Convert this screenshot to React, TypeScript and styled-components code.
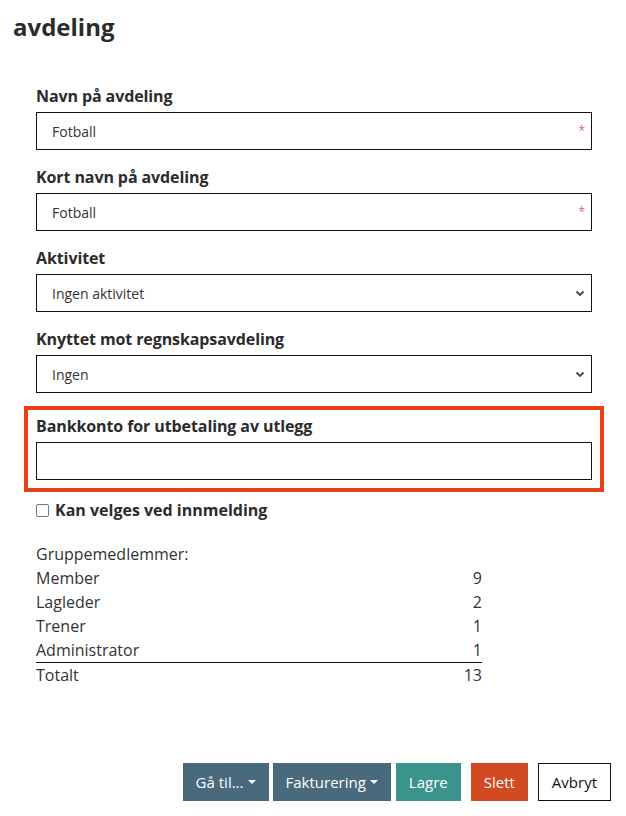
import * as React from 'react'
import styled, { createGlobalStyle } from 'styled-components'

const GlobalStyle = createGlobalStyle`
  body {
    margin: 0;
    background: #fff;
    font-family: "Open Sans", Lato, Arial, sans-serif;
    color: #333;
  }
`

const Page = styled.div`
  width: 626px;
  min-height: 816px;
  box-sizing: border-box;
  padding: 12px 15px 0 13px;
  display: flex;
  flex-direction: column;
`

const Heading = styled.h1`
  margin: 0;
  font-size: 24px;
  font-weight: 700;
  color: #2b2b2b;
  line-height: 30px;
`

const Form = styled.div`
  margin-top: 44px;
  padding: 0 19px 0 23px;
  display: flex;
  flex-direction: column;
`

const Field = styled.div`
  display: flex;
  flex-direction: column;
  margin-bottom: 17px;
`

const Label = styled.label`
  font-size: 16px;
  font-weight: 700;
  color: #2b2b2b;
  line-height: 20px;
  margin-bottom: 6px;
  letter-spacing: -0.1px;
`

const InputWrap = styled.div`
  position: relative;
  height: 38px;
  border: 1px solid #111;
  box-sizing: border-box;
  background: #fff;
  display: flex;
  align-items: center;
  padding: 0 6px 0 15px;
  font-size: 14px;
  color: #333;
`

const Required = styled.span`
  position: absolute;
  right: 6px;
  top: 12px;
  color: #f06060;
  font-size: 12px;
  line-height: 12px;
`

const Chevron = styled.svg`
  margin-left: auto;
  width: 10px;
  height: 10px;
`

const Highlight = styled.div`
  margin: -4px -12px 7px -12px;
  border: 4px solid #e8401c;
  padding: 6px 8px 8px 8px;
  display: flex;
  flex-direction: column;
`

const CheckRow = styled.label`
  display: flex;
  align-items: center;
  gap: 6px;
  font-size: 16px;
  font-weight: 700;
  color: #2b2b2b;
`

const Box = styled.span`
  width: 11px;
  height: 11px;
  border: 1px solid #777;
  border-radius: 2px;
  background: #fff;
`

const Members = styled.div`
  margin-top: 21px;
  width: 446px;
  font-size: 16px;
  color: #333;
`

const MemberRow = styled.div<{ $total?: boolean }>`
  display: flex;
  justify-content: space-between;
  height: 24px;
  line-height: 24px;
  border-top: ${p => (p.$total ? '1px solid #111' : 'none')};
  box-sizing: border-box;
`

const Actions = styled.div`
  margin-top: auto;
  margin-bottom: 15px;
  display: flex;
  justify-content: flex-end;
  gap: 4px;
`

const Button = styled.button<{ $tone: 'slate' | 'teal' | 'red' | 'plain'; $gap?: number }>`
  height: 38px;
  padding: 0 13px;
  border: ${p => (p.$tone === 'plain' ? '1px solid #111' : 'none')};
  background: ${p =>
    p.$tone === 'slate' ? '#496a7d' : p.$tone === 'teal' ? '#3a948c' : p.$tone === 'red' ? '#d24a22' : '#fff'};
  color: ${p => (p.$tone === 'plain' ? '#111' : '#fff')};
  font-family: "Open Sans", Lato, Arial, sans-serif;
  font-size: 15px;
  margin-left: ${p => p.$gap ?? 0}px;
  display: flex;
  align-items: center;
  gap: 4px;
  cursor: pointer;
`

const Caret = styled.span`
  width: 0;
  height: 0;
  border-left: 4px solid transparent;
  border-right: 4px solid transparent;
  border-top: 4px solid #fff;
`

const TextField = ({ label, value, required }: { label: string; value: string; required?: boolean }) => (
  <Field>
    <Label>{label}</Label>
    <InputWrap>
      {value}
      {required && <Required>*</Required>}
    </InputWrap>
  </Field>
)

const SelectField = ({ label, value }: { label: string; value: string }) => (
  <Field>
    <Label>{label}</Label>
    <InputWrap>
      {value}
      <Chevron viewBox="0 0 10 10">
        <path d="M1.5 3.5 L5 7 L8.5 3.5" stroke="#444" strokeWidth="1.8" fill="none" />
      </Chevron>
    </InputWrap>
  </Field>
)

const members = [
  { role: 'Member', count: 9 },
  { role: 'Lagleder', count: 2 },
  { role: 'Trener', count: 1 },
  { role: 'Administrator', count: 1 },
]

export default function App() {
  return (
    <>
      <GlobalStyle />
      <Page>
        <Heading>avdeling</Heading>
        <Form>
          <TextField label="Navn på avdeling" value="Fotball" required />
          <TextField label="Kort navn på avdeling" value="Fotball" required />
          <SelectField label="Aktivitet" value="Ingen aktivitet" />
          <SelectField label="Knyttet mot regnskapsavdeling" value="Ingen" />
          <Highlight>
            <Label>Bankkonto for utbetaling av utlegg</Label>
            <InputWrap />
          </Highlight>
          <CheckRow>
            <Box />
            Kan velges ved innmelding
          </CheckRow>
          <Members>
            <MemberRow>Gruppemedlemmer:</MemberRow>
            {members.map(m => (
              <MemberRow key={m.role}>
                <span>{m.role}</span>
                <span>{m.count}</span>
              </MemberRow>
            ))}
            <MemberRow $total>
              <span>Totalt</span>
              <span>13</span>
            </MemberRow>
          </Members>
        </Form>
        <Actions>
          <Button $tone="slate">
            Gå til...<Caret />
          </Button>
          <Button $tone="slate" $gap={0}>
            Fakturering <Caret />
          </Button>
          <Button $tone="teal" $gap={1}>Lagre</Button>
          <Button $tone="red" $gap={6}>Slett</Button>
          <Button $tone="plain" $gap={6}>Avbryt</Button>
        </Actions>
      </Page>
    </>
  )
}
